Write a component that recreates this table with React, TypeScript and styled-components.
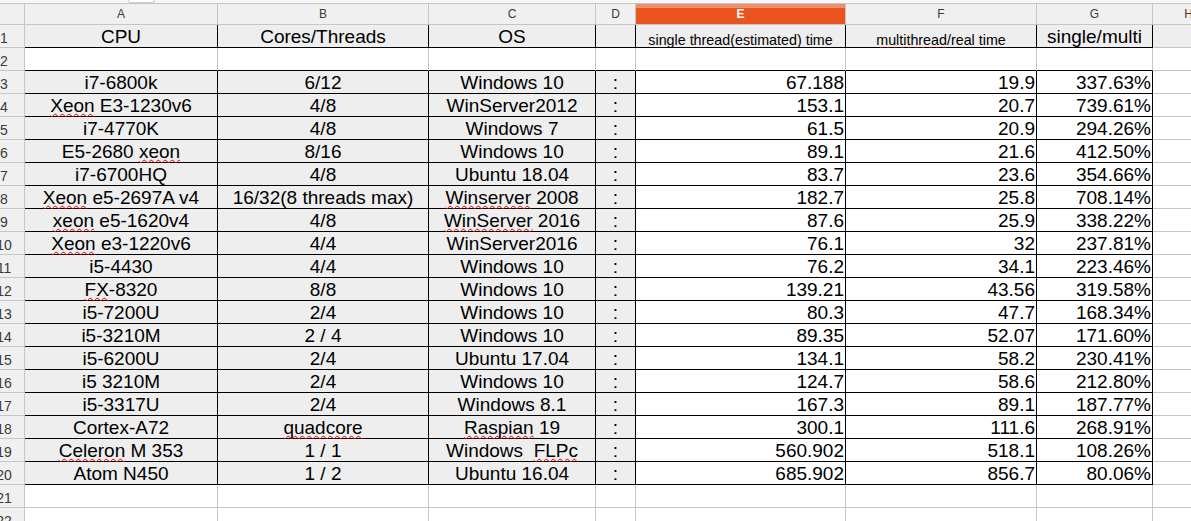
import React from "react";
import styled, { createGlobalStyle } from "styled-components";

const GRID = "#c6c6c6";
const DARK = "#000000";
const SHADE = "#eeeeee";
const HEAD_BG = "#f0f0f0";
const COLS = [25, 193, 211, 167, 40, 210, 191, 116, 72];
const LETTERS = ["A", "B", "C", "D", "E", "F", "G", "H"];
const SELECTED_COL = 4;

const GlobalStyle = createGlobalStyle`
  html, body { margin: 0; padding: 0; background: #ffffff; overflow: hidden; }
  body { font-family: "Liberation Sans", Arial, sans-serif; }
`;

const Page = styled.div`
  width: 1191px;
  height: 521px;
  overflow: hidden;
  background: #ffffff;
`;

const TopStrip = styled.div`
  display: flex;
  height: 3px;
  background: #f7f7f7;
  border-bottom: 1px solid #c4c4c4;
`;

const TabEdge = styled.div`
  margin-left: 128px;
  width: 25px;
  height: 2px;
  background: #ffffff;
  border: 1px solid #cfcfcf;
  border-top: none;
  border-radius: 0 0 3px 3px;
`;

const Sheet = styled.div`
  display: grid;
  grid-template-columns: ${COLS.map((w) => `${w}px`).join(" ")};
  grid-template-rows: 21px;
  grid-auto-rows: 23px;
`;

const Corner = styled.div`
  background: ${HEAD_BG};
  border-right: 1px solid ${GRID};
  border-bottom: 1px solid ${GRID};
`;

const ColHead = styled.div<{ $selected?: boolean }>`
  display: flex;
  align-items: center;
  justify-content: center;
  font-size: 12px;
  color: ${(p) => (p.$selected ? "#ffffff" : "#3a3a3a")};
  font-weight: ${(p) => (p.$selected ? "bold" : "normal")};
  background: ${(p) =>
    p.$selected
      ? "linear-gradient(#ef8e6b 0 4px, #e9541f 4px)"
      : HEAD_BG};
  border-right: 1px solid ${GRID};
  border-bottom: 1px solid ${GRID};
  white-space: nowrap;
`;

const RowHead = styled.div`
  display: flex;
  align-items: flex-end;
  padding-bottom: 1px;
  background: ${HEAD_BG};
  border-right: 1px solid ${GRID};
  border-bottom: 1px solid ${GRID};
  font-size: 14px;
  color: #3a3a3a;
`;

const RowNum = styled.span`
  display: flex;
  justify-content: center;
  width: 8px;
  white-space: nowrap;
`;

type Align = "left" | "center" | "right";

const Cell = styled.div<{
  $align: Align;
  $shade: boolean;
  $rightDark: boolean;
  $bottomDark: boolean;
  $small: boolean;
}>`
  display: flex;
  align-items: flex-end;
  justify-content: ${(p) =>
    p.$align === "center" ? "center" : p.$align === "right" ? "flex-end" : "flex-start"};
  padding: 0 1px;
  background: ${(p) => (p.$shade ? SHADE : "#ffffff")};
  border-right: 1px solid ${(p) => (p.$rightDark ? DARK : GRID)};
  border-bottom: 1px solid ${(p) => (p.$bottomDark ? DARK : GRID)};
  font-size: ${(p) => (p.$small ? "14.3px" : "19px")};
  line-height: normal;
  color: #000000;
  white-space: pre;
  min-width: 0;
`;

const Text = styled.span`
  display: block;
  margin-bottom: -1px;
`;

const Squiggle = styled.span`
  text-decoration-line: underline;
  text-decoration-style: wavy;
  text-decoration-color: #d40000;
  text-decoration-thickness: 1px;
  text-underline-offset: 1px;
  text-decoration-skip-ink: none;
`;

// "~word~" marks a word flagged by the spell checker
const HEADER = [
  "CPU",
  "Cores/Threads",
  "OS",
  "",
  "single thread(estimated) time",
  "~multithread~/real time",
  "single/multi",
  "",
];

const DATA: string[][] = [
  ["i7-6800k", "6/12", "Windows 10", "67.188", "19.9", "337.63%"],
  ["~Xeon~ E3-1230v6", "4/8", "WinServer2012", "153.1", "20.7", "739.61%"],
  ["i7-4770K", "4/8", "Windows 7", "61.5", "20.9", "294.26%"],
  ["E5-2680 ~xeon~", "8/16", "Windows 10", "89.1", "21.6", "412.50%"],
  ["i7-6700HQ", "4/8", "Ubuntu 18.04", "83.7", "23.6", "354.66%"],
  ["~Xeon~ e5-2697A v4", "16/32(8 threads max)", "~Winserver~ 2008", "182.7", "25.8", "708.14%"],
  ["~xeon~ e5-1620v4", "4/8", "~WinServer~ 2016", "87.6", "25.9", "338.22%"],
  ["~Xeon~ e3-1220v6", "4/4", "WinServer2016", "76.1", "32", "237.81%"],
  ["i5-4430", "4/4", "Windows 10", "76.2", "34.1", "223.46%"],
  ["~FX~-8320", "8/8", "Windows 10", "139.21", "43.56", "319.58%"],
  ["i5-7200U", "2/4", "Windows 10", "80.3", "47.7", "168.34%"],
  ["i5-3210M", "2 / 4", "Windows 10", "89.35", "52.07", "171.60%"],
  ["i5-6200U", "2/4", "Ubuntu 17.04", "134.1", "58.2", "230.41%"],
  ["i5 3210M", "2/4", "Windows 10", "124.7", "58.6", "212.80%"],
  ["i5-3317U", "2/4", "Windows 8.1", "167.3", "89.1", "187.77%"],
  ["Cortex-A72", "~quadcore~", "~Raspian~ 19", "300.1", "111.6", "268.91%"],
  ["~Celeron~ M 353", "1 / 1", "Windows  ~FLPc~", "560.902", "518.1", "108.26%"],
  ["Atom N450", "1 / 2", "Ubuntu 16.04", "685.902", "856.7", "80.06%"],
];

function renderText(text: string) {
  return text.split("~").map((seg, i) =>
    i % 2 === 1 ? <Squiggle key={i}>{seg}</Squiggle> : <React.Fragment key={i}>{seg}</React.Fragment>
  );
}

function rowValues(r: number): string[] {
  if (r === 1) return HEADER;
  if (r >= 3 && r <= 20) {
    const d = DATA[r - 3];
    return [d[0], d[1], d[2], ":", d[3], d[4], d[5], ""];
  }
  return ["", "", "", "", "", "", "", ""];
}

export default function App() {
  const rows = Array.from({ length: 22 }, (_, i) => i + 1);
  return (
    <Page>
      <GlobalStyle />
      <TopStrip>
        <TabEdge />
      </TopStrip>
      <Sheet>
        <Corner />
        {LETTERS.map((l, i) => (
          <ColHead key={l} $selected={i === SELECTED_COL}>
            {l}
          </ColHead>
        ))}
        {rows.map((r) => {
          const vals = rowValues(r);
          const inTable = r === 1 || (r >= 3 && r <= 20);
          return (
            <React.Fragment key={r}>
              <RowHead>
                <RowNum>{r}</RowNum>
              </RowHead>
              {vals.map((v, c) => {
                const boxed = inTable && c <= 6;
                const align: Align =
                  r === 1 || c <= 3 ? "center" : c <= 6 ? "right" : "left";
                return (
                  <Cell
                    key={c}
                    $align={align}
                    $shade={r === 1 || (inTable && c <= 3)}
                    $rightDark={boxed}
                    $bottomDark={c <= 6 && (boxed || r === 2)}
                    $small={r === 1 && (c === 4 || c === 5)}
                  >
                    <Text>{renderText(v)}</Text>
                  </Cell>
                );
              })}
            </React.Fragment>
          );
        })}
      </Sheet>
    </Page>
  );
}
